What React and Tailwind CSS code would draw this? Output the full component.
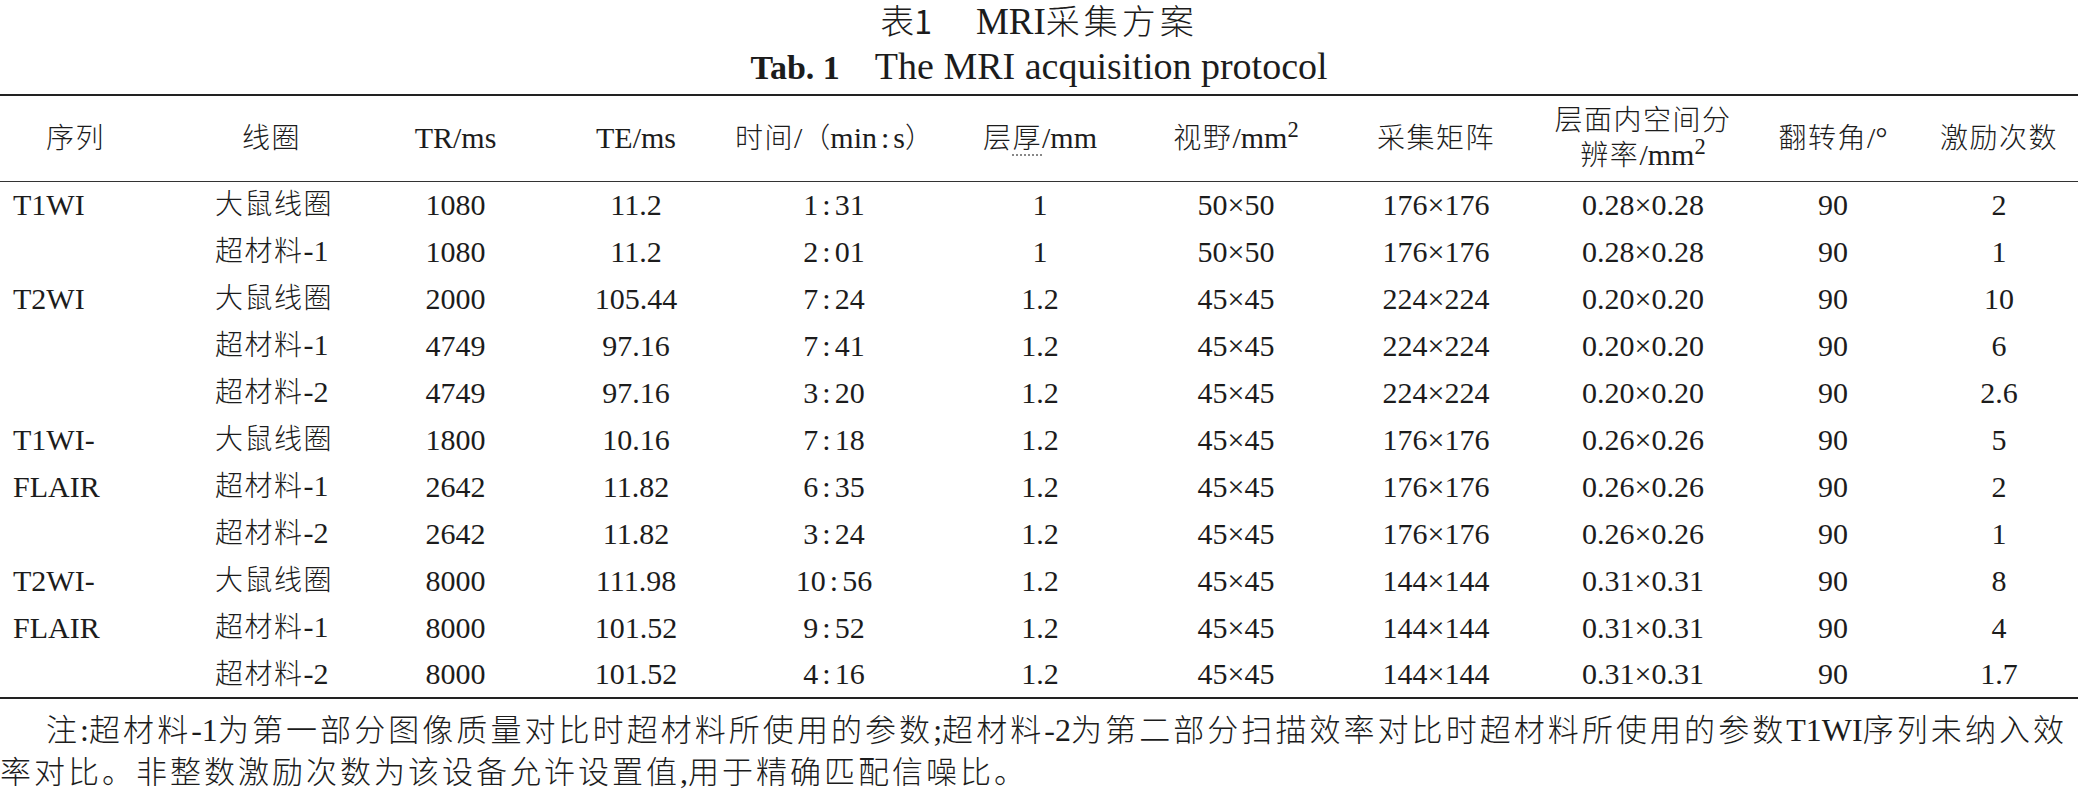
import React from "react";

const cjk = /([\u2236\u3000-\u9fff\uff00-\uffef]+)/;

// wrap CJK runs so they get their own size / spacing
function T({ s, z = "text-[28px] tracking-[1.5px] font-light" }) {
  return s.split(cjk).map((part, i) =>
    cjk.test(part) ? (
      <span key={i} className={z}>
        {part}
      </span>
    ) : (
      <React.Fragment key={i}>{part}</React.Fragment>
    )
  );
}

const rows = [
  ["T1WI", "大鼠线圈", "1080", "11.2", "1:31", "1", "50×50", "176×176", "0.28×0.28", "90", "2"],
  ["", "超材料-1", "1080", "11.2", "2:01", "1", "50×50", "176×176", "0.28×0.28", "90", "1"],
  ["T2WI", "大鼠线圈", "2000", "105.44", "7:24", "1.2", "45×45", "224×224", "0.20×0.20", "90", "10"],
  ["", "超材料-1", "4749", "97.16", "7:41", "1.2", "45×45", "224×224", "0.20×0.20", "90", "6"],
  ["", "超材料-2", "4749", "97.16", "3:20", "1.2", "45×45", "224×224", "0.20×0.20", "90", "2.6"],
  ["T1WI-", "大鼠线圈", "1800", "10.16", "7:18", "1.2", "45×45", "176×176", "0.26×0.26", "90", "5"],
  ["FLAIR", "超材料-1", "2642", "11.82", "6:35", "1.2", "45×45", "176×176", "0.26×0.26", "90", "2"],
  ["", "超材料-2", "2642", "11.82", "3:24", "1.2", "45×45", "176×176", "0.26×0.26", "90", "1"],
  ["T2WI-", "大鼠线圈", "8000", "111.98", "10:56", "1.2", "45×45", "144×144", "0.31×0.31", "90", "8"],
  ["FLAIR", "超材料-1", "8000", "101.52", "9:52", "1.2", "45×45", "144×144", "0.31×0.31", "90", "4"],
  ["", "超材料-2", "8000", "101.52", "4:16", "1.2", "45×45", "144×144", "0.31×0.31", "90", "1.7"],
];

const widths = [160, 207, 177, 184, 212, 200, 192, 208, 206, 174, 158];

function Time({ v }) {
  const [a, b] = v.split(":");
  return (
    <>
      {a}
      <span className="mx-[4px]">:</span>
      {b}
    </>
  );
}

export default function App() {
  return (
    <div
      className="w-[2078px] h-[793px] overflow-hidden bg-white text-[#1c1c1c] text-[30px]"
      style={{ fontFamily: '"Liberation Serif", "Noto Sans CJK SC", serif' }}
    >
      {/* TITLE */}
      <div className="h-[42px] flex items-center justify-center">
        <span className="leading-[38px] text-[37px] whitespace-nowrap">
          <T s="表" z="text-[34px] font-light" />
          <span className="text-[32px]" style={{ fontFamily: '"Noto Sans CJK SC", sans-serif' }}>1</span>
          <span className="inline-block w-[44px]" />
          MRI<T s="采集方案" z="text-[34px] tracking-[4px] font-light" />
        </span>
      </div>
      <div className="h-[50px] flex items-center justify-center">
        <span className="leading-[42px] text-[38px] whitespace-nowrap">
          <b className="text-[34px]">Tab. 1</b>
          <span className="inline-block w-[35px]" />
          The MRI acquisition protocol
        </span>
      </div>

      {/* TABLE */}
      <table className="mt-[2px] w-full table-fixed border-collapse border-t-2 border-b-2 border-[#222]">
        <colgroup>
          {widths.map((w, i) => (
            <col key={i} style={{ width: w }} />
          ))}
        </colgroup>
        <thead>
          <tr className="h-[86px] border-b border-[#333] leading-[34px]">
            <th className="p-0 font-normal text-left pl-[46px]"><T s="序列" /></th>
            <th className="p-0 font-normal text-left pl-[82px]"><T s="线圈" /></th>
            <th className="p-0 font-normal">TR/ms</th>
            <th className="p-0 font-normal">TE/ms</th>
            <th className="p-0 font-normal whitespace-nowrap">
              <T s="时间" />/<T s="（" z="text-[28px] font-light" />min
              <span className="mx-[4px]">:</span>s<T s="）" z="text-[28px] font-light" />
            </th>
            <th className="p-0 font-normal whitespace-nowrap">
              <T s="层" />
              <span className="border-b-2 border-dotted border-[#888]"><T s="厚" /></span>
              /mm
            </th>
            <th className="p-0 font-normal whitespace-nowrap"><T s="视野" />/mm<sup>2</sup></th>
            <th className="p-0 font-normal"><T s="采集矩阵" /></th>
            <th className="p-0 font-normal whitespace-nowrap">
              <T s="层面内空间分" />
              <br />
              <T s="辨率" />/mm<sup>2</sup>
            </th>
            <th className="p-0 font-normal whitespace-nowrap"><T s="翻转角" />/°</th>
            <th className="p-0 font-normal"><T s="激励次数" /></th>
          </tr>
        </thead>
        <tbody>
          {rows.map((r, i) => (
            <tr key={i} className="h-[47px] leading-[30px]">
              <td className="p-0 pl-[13px] whitespace-nowrap">{r[0]}</td>
              <td className="p-0 pl-[55px] whitespace-nowrap"><T s={r[1]} /></td>
              <td className="p-0 text-center">{r[2]}</td>
              <td className="p-0 text-center">{r[3]}</td>
              <td className="p-0 text-center"><Time v={r[4]} /></td>
              <td className="p-0 text-center">{r[5]}</td>
              <td className="p-0 text-center">{r[6]}</td>
              <td className="p-0 text-center">{r[7]}</td>
              <td className="p-0 text-center">{r[8]}</td>
              <td className="p-0 text-center">{r[9]}</td>
              <td className="p-0 text-center">{r[10]}</td>
            </tr>
          ))}
        </tbody>
      </table>

      {/* NOTE */}
      <div className="pt-[10px] leading-[42px] px-[11px] text-[32px]">
        <div className="h-[42px] pl-[35px] text-justify [text-align-last:justify] whitespace-nowrap">
          <T
            s="注:超材料-1为第一部分图像质量对比时超材料所使用的参数;超材料-2为第二部分扫描效率对比时超材料所使用的参数T1WI序列未纳入效"
            z="text-[31px] tracking-[3px] font-light"
          />
        </div>
        <div className="h-[42px] -ml-[11px] whitespace-nowrap">
          <T s="率对比。非整数激励次数为该设备允许设置值,用于精确匹配信噪比。" z="text-[31px] tracking-[3px] font-light" />
        </div>
      </div>
    </div>
  );
}
